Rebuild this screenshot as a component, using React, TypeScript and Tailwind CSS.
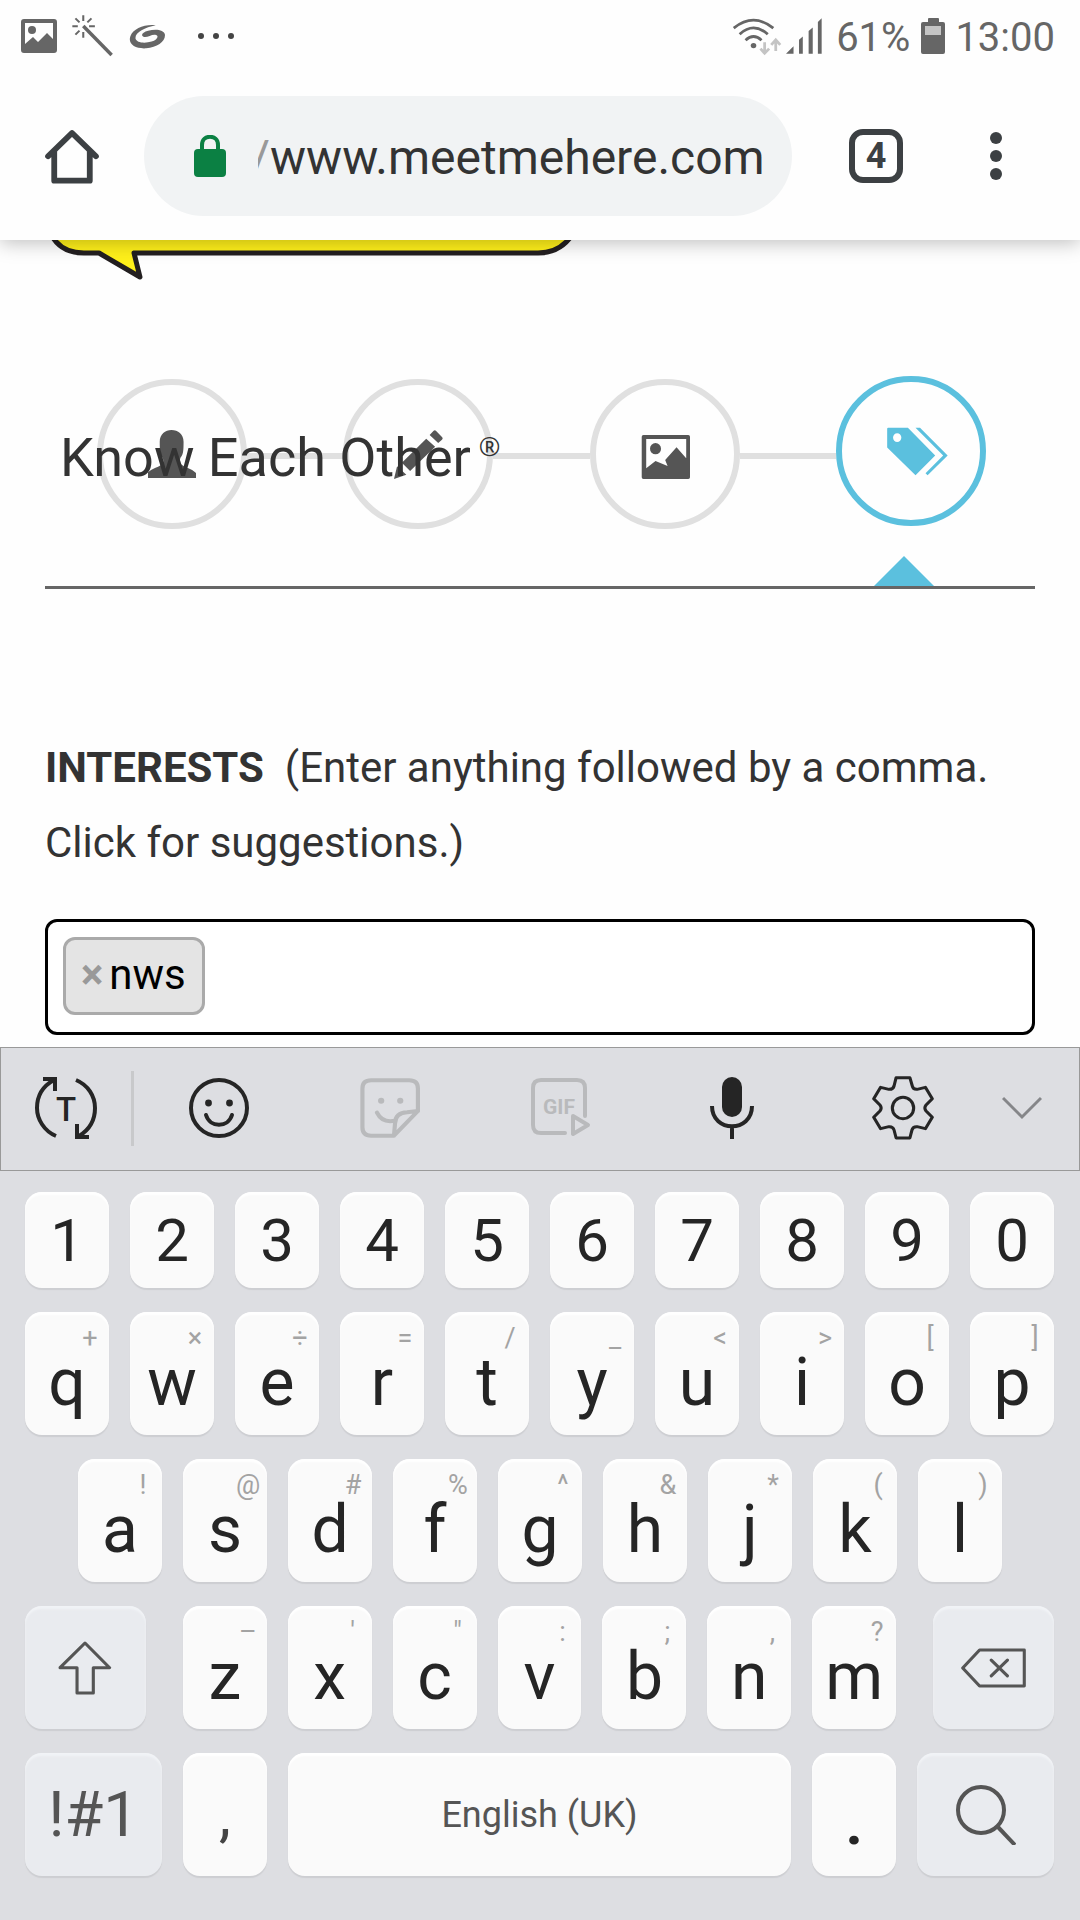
import React from "react";

type IconProps = { box: string; className: string; children: React.ReactNode };

function Icon({ box, className, children }: IconProps) {
  return (
    <svg viewBox={box} className={`block shrink-0 ${className}`} preserveAspectRatio="none" fill="none" aria-hidden="true">
      {children}
    </svg>
  );
}

function StatusBar() {
  return (
    <div className="flex h-[72px] items-center justify-between pl-[21px] pr-[25px] text-[#666666]">
      <div className="flex items-center">
        <Icon box="0 0 36 34" className="h-[34px] w-9">
          <path fill="currentColor" fillRule="evenodd" d="M3 0H33Q36 0 36 3V31Q36 34 33 34H3Q0 34 0 31V3Q0 0 3 0ZM4 4V25L12 18L17 23L26 14L32 20V4Z" />
          <circle cx="11" cy="11" r="4" fill="currentColor" />
        </Icon>
        <Icon box="209 45 123 126" className="ml-[15px] h-[42px] w-[42px]">
          <path stroke="currentColor" strokeWidth="10" d="M242 78L325 165" />
          <path stroke="currentColor" strokeWidth="6" d="M242 46V63M242 96V113M210 79H226M259 79H276M219 55L231 67M266 55L254 67M219 104L231 92" />
        </Icon>
        <Icon box="374 72 108 74" className="ml-[15px] h-[25px] w-[37px]">
          <path fill="currentColor" d="M452 76C420 72 386 86 378 108C370 132 392 146 424 144C456 141 480 124 479 104C477 88 450 86 430 92C414 96 408 104 415 109C424 115 438 103 450 104C464 106 456 119 440 124C420 130 396 128 393 115C391 98 420 82 452 76Z" />
        </Icon>
        <Icon box="0 0 36 8" className="ml-[32px] h-2 w-9 text-[#444444]">
          <g fill="currentColor">
            <circle cx="3" cy="4" r="3" />
            <circle cx="18" cy="4" r="3" />
            <circle cx="33" cy="4" r="3" />
          </g>
        </Icon>
      </div>
      <div className="flex items-center text-[40px] leading-[48px]">
        <Icon box="558 46 144 116" className="h-[39px] w-[50px]">
          <path stroke="currentColor" strokeWidth="8" d="M563 79Q620 32 677 79M580 97Q620 60 661 97M597 115Q620 93 643 115" />
          <circle cx="620" cy="131" r="8" fill="currentColor" />
          <path stroke="#c4c4c4" strokeWidth="8" d="M652 121V153M640 140L652 154L665 140M684 147V115M671 129L684 114L697 129" />
        </Icon>
        <Icon box="718 50 105 111" className="ml-1 h-9 w-9">
          <path fill="currentColor" d="M718 160L740 137V160ZM756 117L767 107V160H756ZM784 90L796 79V160H784ZM811 62L822 51V160H811Z" />
        </Icon>
        <span className="ml-[14px] pt-1">61%</span>
        <Icon box="0 0 24 36" className="ml-[11px] h-9 w-6">
          <path fill="currentColor" d="M7 1Q7 0 8 0H17Q18 0 18 1V4H22Q24 4 24 6V34Q24 36 22 36H2Q0 36 0 34V6Q0 4 2 4H7Z" />
          <path fill="#c4c4c4" d="M4 8H20V17H4Z" />
        </Icon>
        <time className="ml-[10px] pt-1">13:00</time>
      </div>
    </div>
  );
}

function BrowserBar() {
  return (
    <div className="flex items-center pt-6 pb-6 pl-[45px] pr-[78px] text-[#3c4043]">
      <button type="button" aria-label="Home">
        <Icon box="130 385 158 165" className="h-[55px] w-[54px]">
          <path stroke="currentColor" strokeWidth="17" strokeLinecap="round" strokeLinejoin="round" d="M139 467L209 397L279 467M157 452V540H261V452" />
        </Icon>
      </button>
      <label className="ml-[45px] flex h-[120px] min-w-0 flex-1 items-center rounded-full bg-[#f1f3f4] pl-[50px] pr-6">
        <Icon box="0 0 32 42" className="h-[42px] w-8 text-[#0b8043]">
          <rect y="14" width="32" height="28" rx="4" fill="currentColor" />
          <path stroke="currentColor" strokeWidth="4" d="M8 16V10C8 -1 24 -1 24 10V16" />
        </Icon>
        <span className="ml-8 flex w-3 justify-end overflow-hidden pt-[3px] text-[48px] leading-[60px] text-[#999999]">/</span>
        <input
          aria-label="Address"
          defaultValue="www.meetmehere.com"
          className="min-w-0 flex-1 bg-transparent pt-[3px] text-[48px] leading-[60px] text-[#333333] outline-none"
        />
      </label>
      <button type="button" aria-label="Tabs" className="ml-[57px] flex size-[54px] items-center justify-center rounded-[14px] border-[6px] border-[#3c4043] text-[36px] leading-10 font-bold">
        4
      </button>
      <button type="button" aria-label="More options" className="ml-[87px] flex flex-col gap-[6px]">
        <span className="size-3 rounded-full bg-[#3c4043]" />
        <span className="size-3 rounded-full bg-[#3c4043]" />
        <span className="size-3 rounded-full bg-[#3c4043]" />
      </button>
    </div>
  );
}

function Step({ label, active, children }: { label: string; active?: boolean; children: React.ReactNode }) {
  return (
    <button
      type="button"
      aria-label={label}
      className={
        active
          ? "flex size-[150px] shrink-0 items-center justify-center rounded-full border-[6px] border-[#5bc0de] text-[#5bc0de]"
          : "mt-[3px] flex size-[150px] shrink-0 items-center justify-center rounded-full border-[6px] border-[#e0e0e0] text-[#555555]"
      }
    >
      {children}
    </button>
  );
}

function StepLine() {
  return <span className="mt-[77px] h-[6px] flex-1 bg-[#e0e0e0]" />;
}

function Steps() {
  return (
    <nav className="relative mx-[45px] mt-24 flex items-start border-b-[3px] border-[#666666] pb-[57px] pl-[52px] pr-[49px]">
      <Step label="Profile">
        <Icon box="430 273 139 143" className="h-12 w-12">
          <path fill="currentColor" d="M430 416V399C442 388 462 384 473 373C476 366 474 361 472 356C465 346 464 336 464 308C464 286 480 273 498 273C517 273 533 286 533 308C533 336 532 346 524 356C522 362 521 367 523 373C534 384 556 388 569 401V416Z" />
        </Icon>
      </Step>
      <StepLine />
      <Step label="About">
        <Icon box="1147 270 143 147" className="h-[49px] w-[49px]">
          <path fill="currentColor" d="M1147 417L1156 379L1183 404ZM1170 368L1241 296L1267 320L1194 393ZM1251 285L1262 273Q1266 269 1270 273L1287 291Q1291 295 1287 299L1276 309Z" />
        </Icon>
      </Step>
      <StepLine />
      <Step label="Photos">
        <Icon box="293 270 145 147" className="h-[49px] w-[50px]">
          <path fill="currentColor" fillRule="evenodd" d="M303 285H433Q438 285 438 290V412Q438 417 433 417H303Q298 417 298 412V290Q298 285 303 285ZM311 297V385L338 363L373 378L366 360L399 322L427 355V297Z" />
          <ellipse cx="338" cy="326" rx="16" ry="17" fill="currentColor" />
        </Icon>
      </Step>
      <StepLine />
      <Step label="Interests" active>
        <Icon box="967 262 217 148" className="h-[49px] w-[75px]">
          <path fill="currentColor" fillRule="evenodd" d="M1011 264H1068L1147 348L1090 408L1008 324V267Q1008 264 1011 264ZM1037 281A12 13 0 1 0 1037 307A12 13 0 1 0 1037 281Z" />
          <path fill="currentColor" d="M1090 264H1103L1183 348L1125 408L1119 402L1170 348Z" />
        </Icon>
      </Step>
      <Icon box="0 0 60 30" className="absolute right-[101px] bottom-0 h-[30px] w-[60px] text-[#5bc0de]">
        <path fill="currentColor" d="M0 30L30 0L60 30Z" />
      </Icon>
      <h1 className="pointer-events-none absolute top-[52px] left-[15px] flex items-start gap-2 text-[54px] leading-[60px] whitespace-nowrap text-[#333333]">
        Know Each Other
        <sup className="top-0 font-['Open_Sans',sans-serif] text-[26px] leading-[36px]">®</sup>
      </h1>
    </nav>
  );
}

function Page() {
  return (
    <main className="flex-1 bg-[#fefefe]">
      <svg viewBox="0 0 580 40" className="block h-10 w-[580px]" fill="none" aria-hidden="true">
        <path fill="#fff01a" stroke="#231f20" strokeWidth="5" strokeLinejoin="round" d="M50 -8C57 8 69 13 84 13H99L140 37L134 13H538C552 13 565 7 574 -8" />
      </svg>
      <Steps />
      <form className="mx-[45px] mt-[141px]" onSubmit={(event) => event.preventDefault()}>
        <label htmlFor="interests" className="block text-[42px] leading-[75px] text-[#333333]">
          <strong className="font-bold">INTERESTS</strong>&nbsp; (Enter anything followed by a comma. Click for suggestions.)
        </label>
        <div className="mt-[39px] mb-3 flex rounded-xl border-[3px] border-black bg-white p-[15px] pb-[17px]">
          <span className="flex h-[78px] shrink-0 items-center rounded-xl border-[3px] border-[#aaaaaa] bg-[#e4e4e4] pr-4 pb-[2px] pl-[15px] text-[42px] leading-[70px] text-black">
            <button type="button" aria-label="Remove nws" className="mr-[6px] font-bold text-[#999999]">
              ×
            </button>
            nws
          </span>
          <input id="interests" className="ml-4 min-w-0 flex-1 bg-transparent text-[42px] outline-none" />
        </div>
      </form>
    </main>
  );
}

function KeyboardTools() {
  const tool = "flex flex-[171_1_0%] items-center justify-center";
  return (
    <div className="flex h-[124px] items-center border border-[#999999] pb-[2px] text-[#252525]">
      <button type="button" aria-label="Text mode" className="flex flex-[130_1_0%] items-center justify-center">
        <Icon box="0 0 62 64" className="h-16 w-[62px]">
          <path stroke="currentColor" strokeWidth="4" d="M21 60C9 55 2 43 2 32C2 20 8 10 19 4M41 4C53 9 60 20 60 32C60 44 54 54 44 60M8 3H20V15M42 48V61H54" />
          <text x="31" y="45" textAnchor="middle" fontSize="33" fontWeight="500" fill="currentColor">T</text>
        </Icon>
      </button>
      <span className="h-[75px] w-[3px] bg-[#c8c9cb]" />
      <button type="button" aria-label="Emoji" className={tool}>
        <Icon box="0 0 60 60" className="size-[60px]">
          <g stroke="currentColor" strokeWidth="4" strokeLinecap="round">
            <circle cx="30" cy="30" r="28" />
            <path d="M17 37C21 50 39 50 43 37" />
          </g>
          <circle cx="19.500" cy="25" r="3.400" fill="currentColor" />
          <circle cx="40.500" cy="25" r="3.400" fill="currentColor" />
        </Icon>
      </button>
      <button type="button" aria-label="Stickers" className={`${tool} text-[#b9babc]`}>
        <Icon box="1048 144 173 180" className="h-[60px] w-[60px]">
          <path stroke="currentColor" strokeWidth="12" strokeLinecap="round" strokeLinejoin="round" d="M1146 317H1080Q1055 317 1055 292V176Q1055 151 1080 151H1190Q1215 151 1215 176V243L1146 317L1149 280Q1150 248 1184 247L1215 243M1097 248Q1112 280 1149 272" />
          <circle cx="1109" cy="212" r="9" fill="currentColor" />
          <circle cx="1164" cy="212" r="9" fill="currentColor" />
        </Icon>
      </button>
      <button type="button" aria-label="GIF" className={`${tool} text-[#b9babc]`}>
        <Icon box="0 0 60 60" className="size-[60px]">
          <path stroke="currentColor" strokeWidth="4" strokeLinecap="round" strokeLinejoin="round" d="M34 55H10Q2 55 2 47V10Q2 2 10 2H46Q54 2 54 10V38M42 38L57 47L42 56Z" />
          <text x="28" y="36" textAnchor="middle" fontSize="21" fontWeight="700" fill="currentColor">GIF</text>
        </Icon>
      </button>
      <button type="button" aria-label="Voice input" className={tool}>
        <Icon box="0 0 44 62" className="h-[62px] w-11">
          <rect x="12" width="20" height="40" rx="10" fill="currentColor" />
          <path stroke="currentColor" strokeWidth="4" d="M2 29C2 56 42 56 42 29M22 49V62" />
        </Icon>
      </button>
      <button type="button" aria-label="Settings" className={tool}>
        <Icon box="967 138 180 192" className="h-16 w-[62px]">
          <g stroke="currentColor" strokeWidth="9" strokeLinejoin="round">
            <path d="M1037 143H1077L1084 168Q1086 179 1098 178L1122 172L1142 206L1124 225Q1117 234 1124 243L1142 262L1122 296L1098 290Q1086 289 1083 300L1077 324H1037L1031 300Q1028 289 1016 290L992 296L972 262L990 243Q997 234 990 225L972 206L992 172L1016 178Q1028 179 1031 168Z" />
            <ellipse cx="1057" cy="234" rx="31" ry="32" />
          </g>
        </Icon>
      </button>
      <button type="button" aria-label="Hide keyboard" className="flex flex-[67_1_0%] justify-center text-[#858689]">
        <Icon box="0 0 40 24" className="h-6 w-10">
          <path stroke="currentColor" strokeWidth="3" d="M1 2L20 21L39 2" />
        </Icon>
      </button>
      <span className="w-6" />
    </div>
  );
}

const keyBase = "relative flex items-center justify-center rounded-[17px] shadow-[inset_0_3px_2px_#ffffff,0_2px_1px_#cdced2]";
const lightKey = `${keyBase} bg-[#fafafa] text-[#252525]`;
const darkKey =
  "flex items-center justify-center rounded-[17px] bg-[#e9ebef] text-[#555555] shadow-[inset_0_3px_2px_#f1f3f6,0_2px_1px_#cdced2]";

function LetterKey({ letter, hint }: { letter: string; hint: string }) {
  return (
    <button type="button" className={`${lightKey} h-[123px] flex-[84_1_0%] pt-[18px] text-[66px] leading-[72px]`}>
      {letter}
      <span className="absolute top-2 right-0 w-[38px] text-center text-[27px] leading-9 text-[#a3a3a3]">{hint}</span>
    </button>
  );
}

const numbers = "1234567890".split("");
const topRow = ["q+", "w×", "e÷", "r=", "t/", "y_", "u<", "i>", "o[", "p]"];
const homeRow = ["a!", "s@", "d#", "f%", "g^", "h&", "j*", "k(", "l)"];
const bottomRow = ["z–", "x'", 'c"', "v:", "b;", "n,", "m?"];

function Keyboard() {
  return (
    <section aria-label="Keyboard" className="bg-[#dddee2]">
      <KeyboardTools />
      <div className="flex flex-col gap-6 pt-[21px] pr-[26px] pb-11 pl-[25px]">
        <div className="flex gap-[21px]">
          {numbers.map((n) => (
            <button key={n} type="button" className={`${lightKey} h-24 flex-[84_1_0%] pt-[2px] text-[60px] leading-[72px]`}>
              {n}
            </button>
          ))}
        </div>
        <div className="flex gap-[21px]">
          {topRow.map((k) => (
            <LetterKey key={k} letter={k[0]} hint={k[1]} />
          ))}
        </div>
        <div className="flex gap-[21px] pr-[52px] pl-[53px]">
          {homeRow.map((k) => (
            <LetterKey key={k} letter={k[0]} hint={k[1]} />
          ))}
        </div>
        <div className="flex gap-[21px]">
          <button type="button" aria-label="Shift" className={`${darkKey} mr-4 h-[123px] flex-[121_1_0%]`}>
            <Icon box="170 150 156 162" className="h-[54px] w-[54px]">
              <path stroke="currentColor" strokeWidth="9" strokeLinejoin="round" d="M248 156L319 230H272V306H225V230H176Z" />
            </Icon>
          </button>
          {bottomRow.map((k) => (
            <LetterKey key={k} letter={k[0]} hint={k[1]} />
          ))}
          <button type="button" aria-label="Backspace" className={`${darkKey} ml-4 h-[123px] flex-[121_1_0%]`}>
            <Icon box="1225 170 189 122" className="h-10 w-[65px]">
              <path stroke="currentColor" strokeWidth="9" strokeLinecap="round" strokeLinejoin="round" d="M1230 231L1279 176H1409V286H1279ZM1313 207L1360 255M1360 207L1313 255" />
            </Icon>
          </button>
        </div>
        <div className="flex gap-[21px]">
          <button type="button" className={`${darkKey} h-[123px] flex-[137_1_0%] text-[63px] leading-[72px]`}>
            !#1
          </button>
          <button type="button" className={`${lightKey} h-[123px] flex-[84_1_0%] text-[60px] leading-[72px]`}>
            <span className="text-[#444444]">,</span>
          </button>
          <button type="button" className={`${lightKey} h-[123px] flex-[504_1_0%] text-[36px] leading-[48px]`}>
            <span className="text-[#555555]">English (UK)</span>
          </button>
          <button type="button" className={`${lightKey} h-[123px] flex-[84_1_0%] pt-[18px] text-[60px] leading-[72px] font-bold`}>
            .
          </button>
          <button type="button" aria-label="Search" className={`${darkKey} h-[123px] flex-[137_1_0%]`}>
            <Icon box="0 0 60 60" className="size-[60px]">
              <path stroke="currentColor" strokeWidth="4" d="M41 41L59 60" />
              <circle cx="25" cy="25" r="23" stroke="currentColor" strokeWidth="4" />
            </Icon>
          </button>
        </div>
      </div>
    </section>
  );
}

export default function App() {
  return (
    <div className="flex min-h-screen flex-col overflow-x-hidden bg-[#fefefe] font-['Roboto',sans-serif]">
      <header className="relative z-10 bg-[#fefefe] shadow-[0_3px_18px_rgba(0,0,0,0.25)]">
        <StatusBar />
        <BrowserBar />
      </header>
      <Page />
      <Keyboard />
    </div>
  );
}
